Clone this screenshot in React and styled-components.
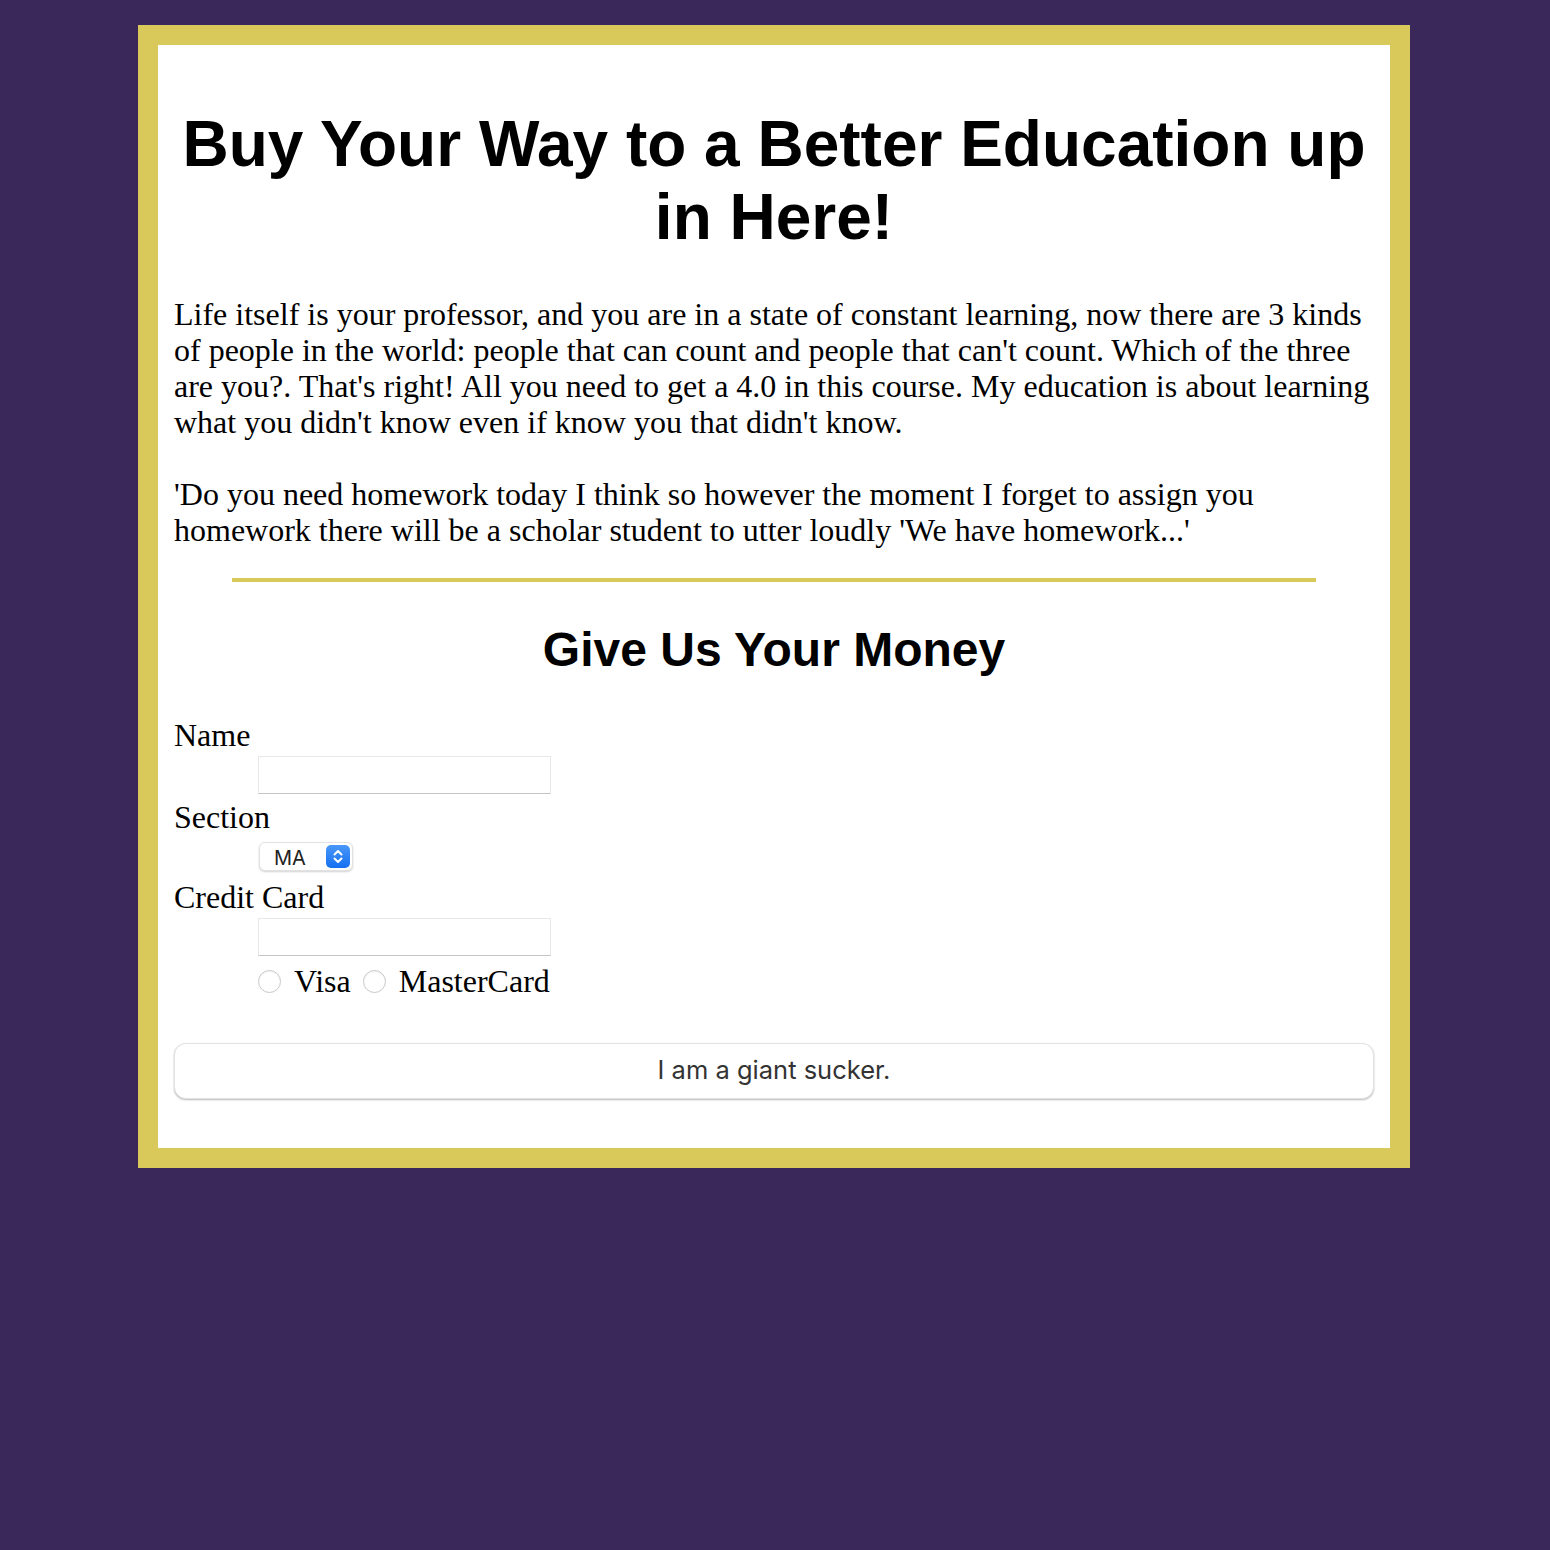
import { createGlobalStyle, styled } from "styled-components";

const GlobalStyle = createGlobalStyle`
  html, body {
    margin: 0;
    padding: 0;
    background: #3a285b;
  }
  body {
    font-family: "Liberation Serif", "Times New Roman", serif;
  }
`;

const Card = styled.main`
  box-sizing: border-box;
  width: 1272px;
  margin: 25px 0 0 138px;
  padding: 16px;
  background: #fff;
  border: 20px solid #d9c85a;
  color: #000;
`;

const Title = styled.h1`
  font-family: "Liberation Sans", Arial, sans-serif;
  font-weight: 700;
  font-size: 64px;
  line-height: 73px;
  text-align: center;
  margin: 47px 0 42px;
`;

const Para = styled.p`
  font-size: 32px;
  line-height: 36px;
  margin: 0 0 36px;
  &:last-of-type {
    margin-bottom: 30px;
  }
`;

const Rule = styled.hr`
  width: 1084px;
  height: 4px;
  margin: 0 auto;
  border: 0;
  background: #d9c85a;
`;

const SubTitle = styled.h2`
  font-family: "Liberation Sans", Arial, sans-serif;
  font-weight: 700;
  font-size: 48px;
  line-height: 55px;
  text-align: center;
  margin: 40px 0 40px;
`;

const Form = styled.form`
  display: flex;
  flex-direction: column;
  align-items: flex-start;
`;

const FieldLabel = styled.label`
  display: block;
  font-size: 32px;
  line-height: 36px;
`;

const TextInput = styled.input`
  box-sizing: border-box;
  width: 293px;
  height: 38px;
  margin: 3px 0 ${(p) => p.$after || 5}px 84px;
  border: 1px solid #e8e8e8;
  border-bottom-color: #c4c4c4;
  background: #fff;
  outline: none;
`;

const SelectWrap = styled.div`
  position: relative;
  margin: 7px 0 8px 85px;
`;

const Select = styled.select`
  appearance: none;
  box-sizing: border-box;
  width: 94px;
  height: 29px;
  padding: 2px 0 0 14px;
  border: 1px solid #e2e2e2;
  border-radius: 6px;
  box-shadow: 0 1px 2px rgba(0, 0, 0, 0.18);
  background: #fff;
  font-family: Inter, "Liberation Sans", sans-serif;
  font-size: 20px;
  color: #222;
`;

const Badge = styled.svg`
  position: absolute;
  top: 3px;
  left: 67px;
  width: 24px;
  height: 23px;
  pointer-events: none;
`;

const RadioRow = styled.div`
  display: flex;
  align-items: center;
  margin-left: 84px;
  height: 44px;
  font-size: 32px;
`;

const Radio = styled.input`
  appearance: none;
  box-sizing: border-box;
  width: 23px;
  height: 23px;
  margin: 0 13px 0 0;
  border: 1px solid #c8c8c8;
  border-radius: 50%;
  background: #fff;
  box-shadow: inset 0 1px 1px rgba(0, 0, 0, 0.05);
`;

const RadioText = styled.span`
  margin-right: ${(p) => p.$gap || 0}px;
`;

const Button = styled.button`
  box-sizing: border-box;
  width: 100%;
  height: 56px;
  margin: 40px 0 33px;
  padding-bottom: 4px;
  border: 1px solid #e2e2e2;
  border-radius: 12px;
  background: #fff;
  box-shadow: 0 1px 2px rgba(0, 0, 0, 0.28);
  font-family: Inter, "Liberation Sans", sans-serif;
  font-size: 25.5px;
  color: #333;
`;

const App = () => {
  return (
    <>
      <GlobalStyle />
      <Card>
        <Title>Buy Your Way to a Better Education up in Here!</Title>
        <Para>
          Life itself is your professor, and you are in a state of constant
          learning, now there are 3 kinds of people in the world: people that
          can count and people that can't count. Which of the three are you?.
          That's right! All you need to get a 4.0 in this course. My education
          is about learning what you didn't know even if know you that didn't
          know.
        </Para>
        <Para>
          'Do you need homework today I think so however the moment I forget to
          assign you homework there will be a scholar student to utter loudly
          'We have homework...'
        </Para>
        <Rule />
        <SubTitle>Give Us Your Money</SubTitle>
        <Form onSubmit={(e) => e.preventDefault()}>
          <FieldLabel htmlFor="name">Name</FieldLabel>
          <TextInput id="name" type="text" />
          <FieldLabel htmlFor="section">Section</FieldLabel>
          <SelectWrap>
            <Select id="section" defaultValue="MA">
              <option>MA</option>
            </Select>
            <Badge viewBox="0 0 24 23">
              <defs>
                <linearGradient id="blue" x1="0" y1="0" x2="0" y2="1">
                  <stop offset="0" stopColor="#4a97f8" />
                  <stop offset="1" stopColor="#1570f0" />
                </linearGradient>
              </defs>
              <rect width="24" height="23" rx="5" fill="url(#blue)" />
              <path
                d="M8.5 9.5 L12 6 L15.5 9.5 M8.5 13.5 L12 17 L15.5 13.5"
                fill="none"
                stroke="#fff"
                strokeWidth="2"
                strokeLinecap="round"
                strokeLinejoin="round"
              />
            </Badge>
          </SelectWrap>
          <FieldLabel htmlFor="card">Credit Card</FieldLabel>
          <TextInput id="card" type="text" $after={3} />
          <RadioRow>
            <Radio type="radio" name="cardtype" id="visa" />
            <RadioText $gap={12}>Visa</RadioText>
            <Radio type="radio" name="cardtype" id="mc" />
            <RadioText>MasterCard</RadioText>
          </RadioRow>
          <Button type="submit">I am a giant sucker.</Button>
        </Form>
      </Card>
    </>
  );
};

export default App;
